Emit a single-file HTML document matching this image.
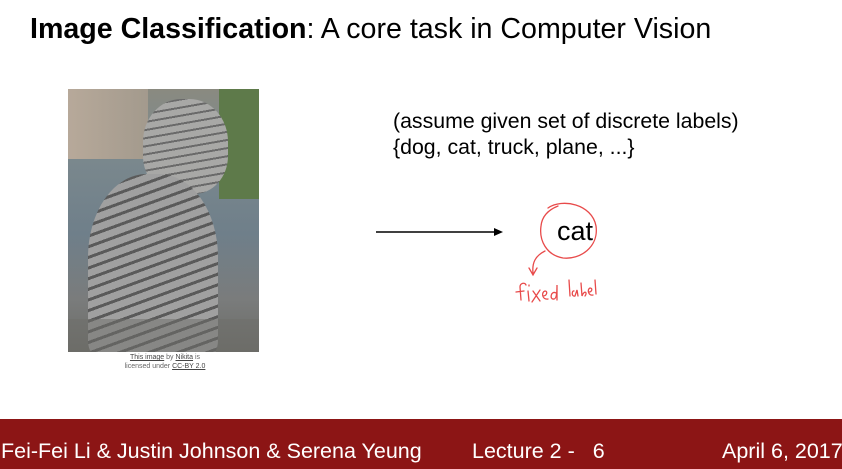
<!DOCTYPE html>
<html><head><style>
body{margin:0;width:842px;height:469px;background:#fff;position:relative;overflow:hidden;font-family:"Liberation Sans",sans-serif}
.t{position:absolute;left:30px;top:13px;font-size:28.6px;color:#000;white-space:nowrap}
.img{position:absolute;left:68px;top:89px;width:191px;height:263px;overflow:hidden;
background:linear-gradient(180deg,#8a8a80 0%,#7d8a8e 20%,#6f7f8a 55%,#7a7c7c 80%,#6b6b66 100%)}
.cred{position:absolute;left:100px;top:353px;width:130px;text-align:center;font-size:7px;color:#666;line-height:9px}
.cred u{color:#444}
.l{position:absolute;left:393px;font-size:21.3px;color:#000;white-space:nowrap}
.foot{position:absolute;left:0;top:419px;width:842px;height:50px;background:#8c1515;color:#fff;font-size:21.5px}
.foot span{position:absolute;top:20px;white-space:nowrap}
</style></head><body>
<div class="t"><b>Image Classification</b>: A core task in Computer Vision</div>
<div class="img">
<div style="position:absolute;left:0;top:0;width:80px;height:70px;background:linear-gradient(90deg,#b7a99a,#a39a8d)"></div>
<div style="position:absolute;right:0;top:0;width:40px;height:110px;background:#5e7a4a"></div>
<div style="position:absolute;left:75px;top:10px;width:85px;height:95px;border-radius:45% 45% 40% 40%;background:repeating-linear-gradient(170deg,#a8a8a6 0 6px,#6a6a6a 6px 8px)"></div>
<div style="position:absolute;left:20px;top:85px;width:130px;height:185px;border-radius:45% 45% 10% 10%;background:repeating-linear-gradient(160deg,#a0a0a0 0 7px,#5a5a5a 7px 10px)"></div>
<div style="position:absolute;left:0;top:230px;width:191px;height:33px;background:#6e6e6a;opacity:.5"></div>
</div>
<div class="cred"><u>This image</u> by <u>Nikita</u> is<br>licensed under <u>CC-BY 2.0</u></div>
<div class="l" style="top:109px">(assume given set of discrete labels)</div>
<div class="l" style="top:135px">{dog, cat, truck, plane, ...}</div>
<svg style="position:absolute;left:0;top:0" width="842" height="419">
<line x1="376" y1="232" x2="496" y2="232" stroke="#000" stroke-width="1.5"/>
<polygon points="503,232 494,228 494,236" fill="#000"/>
<g fill="none" stroke="#e84a4a" stroke-width="1.3" stroke-linecap="round">
<path d="M548,208 C562,198 592,204 596,226 C599,247 580,260 563,258 C546,255 539,240 541,226 C542,216 548,210 558,206"/>
<path d="M545,251 C535,256 532,263 533,273 M529,268 L533,275 L537,268"/>
<path d="M521,300 L520,287 C520,283 525,282 526,285 M516,292 L524,291 M528,291 L529,301 M529,285 L529,286 M533,291 L540,301 M540,290 L532,302 M543,296 C547,296 548,291 545,291 C541,292 542,300 548,299 M556,293 C551,290 549,300 554,299 C556,299 557,295 557,285 L557,300"/>
<path d="M569,280 L570,296 M574,291 C572,290 571,297 575,296 L577,290 L578,296 M581,283 L582,296 C584,290 588,292 585,296 M589,292 C592,292 593,288 590,288 C587,289 588,296 593,295 M595,280 L596,294"/>
</g>
</svg>
<div style="position:absolute;left:557px;top:216px;font-size:27px">cat</div>
<div class="foot"><span style="left:1px">Fei-Fei Li &amp; Justin Johnson &amp; Serena Yeung</span><span style="left:472px">Lecture 2 -&nbsp;&nbsp;&nbsp;6</span><span style="left:722px">April 6, 2017</span></div>
</body></html>
